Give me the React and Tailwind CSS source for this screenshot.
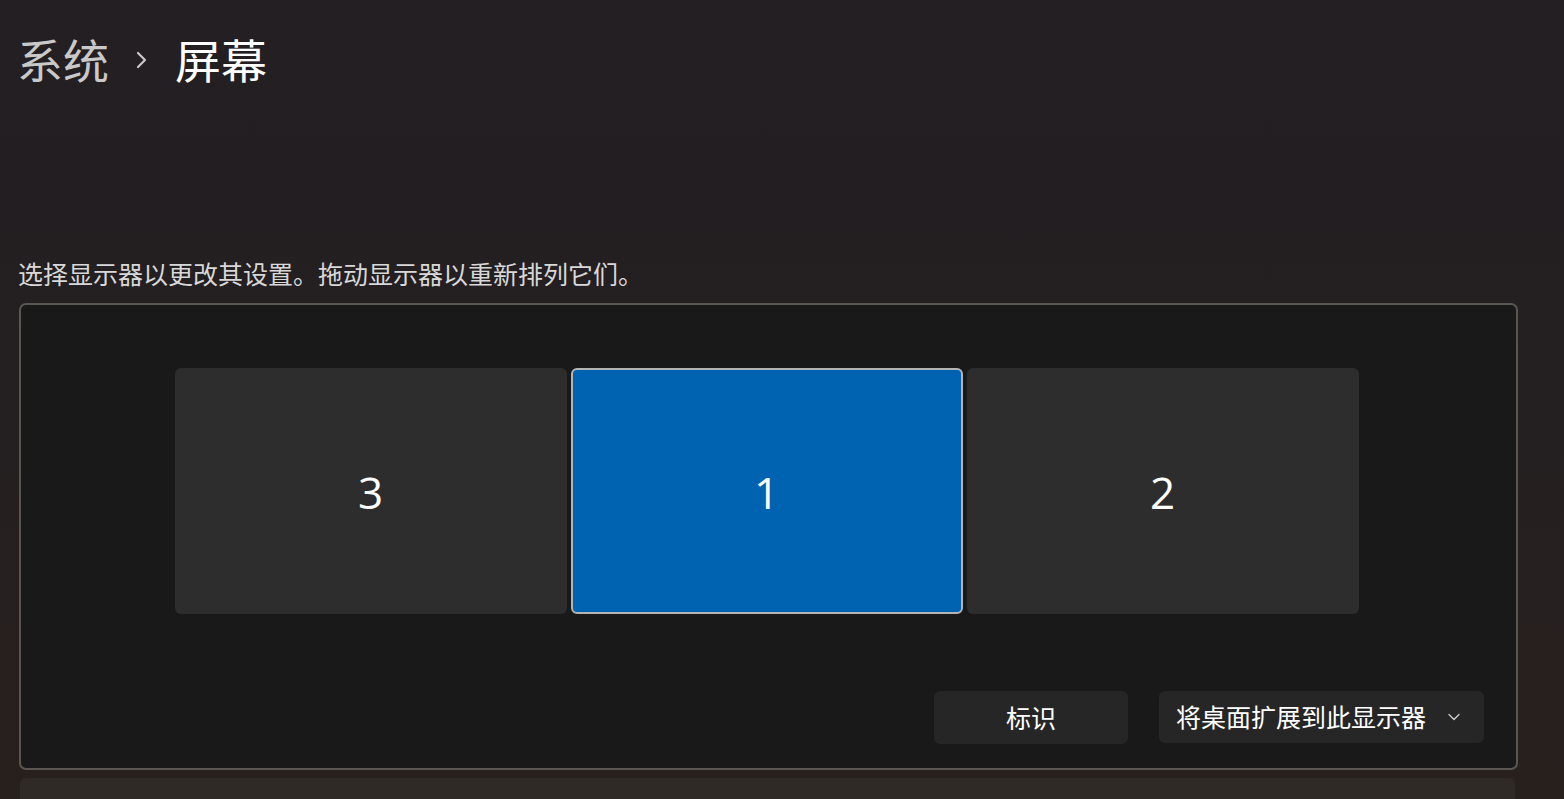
import React from "react";
import { ChevronDown } from "lucide-react";

const CJK = "font-['Noto_Sans_CJK_SC','Noto_Sans',sans-serif]";

const MONITORS = [
  { id: "3", active: false },
  { id: "1", active: true },
  { id: "2", active: false },
];

function Monitor({ id, active }) {
  return (
    <div
      className={`w-[392px] h-[246px] rounded-[6px] flex items-center justify-center ${
        active ? "bg-[#0063b1] border-2 border-[#b4b4b4]" : "bg-[#2d2d2d]"
      }`}
    >
      <span className="text-white text-[44px] leading-none font-['Open_Sans',sans-serif] mt-[2px]">{id}</span>
    </div>
  );
}

export default function App() {
  return (
    <div className={`h-[799px] w-full overflow-hidden bg-gradient-to-b from-[#231f22] via-[#241f21] to-[#28201d] ${CJK}`}>
      <div className="pl-[17px] pt-[35px] flex items-center h-[81px]">
        <span className="text-[46px] leading-none text-[#c9c9c9]">系统</span>
        <svg width="12" height="20" viewBox="0 0 12 20" className="mx-[27px] mt-[4px]" fill="none">
          <path d="M2 3l7 7-7 7" stroke="#c9c9c9" strokeWidth="2.2" strokeLinecap="round" strokeLinejoin="round" />
        </svg>
        <span className="text-[46px] leading-none text-white">屏幕</span>
      </div>

      <div className="pl-[18px] mt-[176px] text-[25px] leading-[32px] text-[#d8d8d8]">选择显示器以更改其设置。拖动显示器以重新排列它们。</div>

      <div className="ml-[19px] mt-[14px] w-[1499px] h-[467px] rounded-[7px] border-2 border-[#5a5651] bg-[#191919] flex flex-col">
        <div className="flex justify-center gap-[4px] mt-[63px] pr-[4px]">
          {MONITORS.map((m) => (
            <Monitor key={m.id} {...m} />
          ))}
        </div>
        <div className="flex justify-end gap-[31px] mt-auto mb-[24px] pr-[32px]">
          <button className="w-[194px] h-[53px] rounded-[6px] bg-[#262626] text-white text-[25px] flex items-center justify-center">
            标识
          </button>
          <button className="w-[325px] h-[52px] rounded-[6px] bg-[#262626] text-white text-[25px] flex items-center pl-[17px] pr-[20px]">
            <span className="flex-1 text-left">将桌面扩展到此显示器</span>
            <ChevronDown size={20} strokeWidth={1.5} className="text-[#cfcfcf]" />
          </button>
        </div>
      </div>

      <div className="ml-[20px] mt-[8px] w-[1495px] h-[40px] rounded-t-[6px] bg-[#302a26]" />
    </div>
  );
}
